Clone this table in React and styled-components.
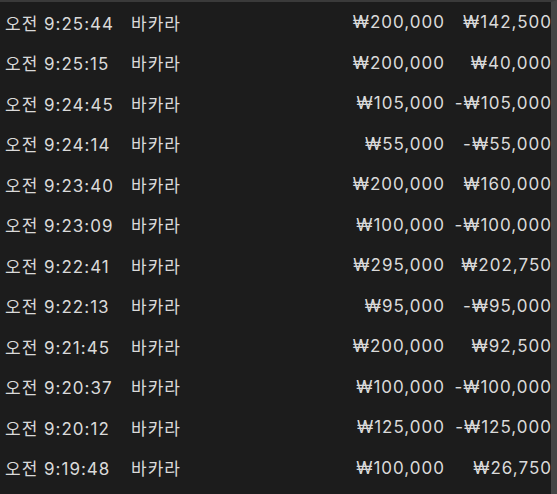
import React from "react";
import styled, { createGlobalStyle } from "styled-components";

const Global = createGlobalStyle`
  html, body { margin: 0; padding: 0; background: #1c1c1c; }
  body { font-family: Inter, "Noto Sans CJK KR", sans-serif; }
`;

const Panel = styled.div`
  width: 557px;
  height: 494px;
  box-sizing: border-box;
  background: #1c1c1c;
  border-top: 2px solid #3a3a3a;
  border-right: 6px solid #454545;
  overflow: hidden;
`;

const Row = styled.div`
  display: grid;
  grid-template-columns: 126px 1fr auto 107px;
  align-items: center;
  height: 40.5px;
  padding-left: 5px;
  color: #dadada;
  font-size: 17px;
  letter-spacing: 1px;
  white-space: nowrap;
`;

const Cell = styled.div`
  text-align: ${(p) => (p.$right ? "right" : "left")};
  margin-right: ${(p) => (p.$right ? "-1px" : "0")};
`;

const rows = [
  ["오전 9:25:44", "바카라", "₩200,000", "₩142,500"],
  ["오전 9:25:15", "바카라", "₩200,000", "₩40,000"],
  ["오전 9:24:45", "바카라", "₩105,000", "-₩105,000"],
  ["오전 9:24:14", "바카라", "₩55,000", "-₩55,000"],
  ["오전 9:23:40", "바카라", "₩200,000", "₩160,000"],
  ["오전 9:23:09", "바카라", "₩100,000", "-₩100,000"],
  ["오전 9:22:41", "바카라", "₩295,000", "₩202,750"],
  ["오전 9:22:13", "바카라", "₩95,000", "-₩95,000"],
  ["오전 9:21:45", "바카라", "₩200,000", "₩92,500"],
  ["오전 9:20:37", "바카라", "₩100,000", "-₩100,000"],
  ["오전 9:20:12", "바카라", "₩125,000", "-₩125,000"],
  ["오전 9:19:48", "바카라", "₩100,000", "₩26,750"],
];

export default function App() {
  return (
    <>
      <Global />
      <Panel>
        {rows.map((r, i) => (
          <Row key={i}>
            <Cell>{r[0]}</Cell>
            <Cell>{r[1]}</Cell>
            <Cell $right>{r[2]}</Cell>
            <Cell $right>{r[3]}</Cell>
          </Row>
        ))}
      </Panel>
    </>
  );
}
